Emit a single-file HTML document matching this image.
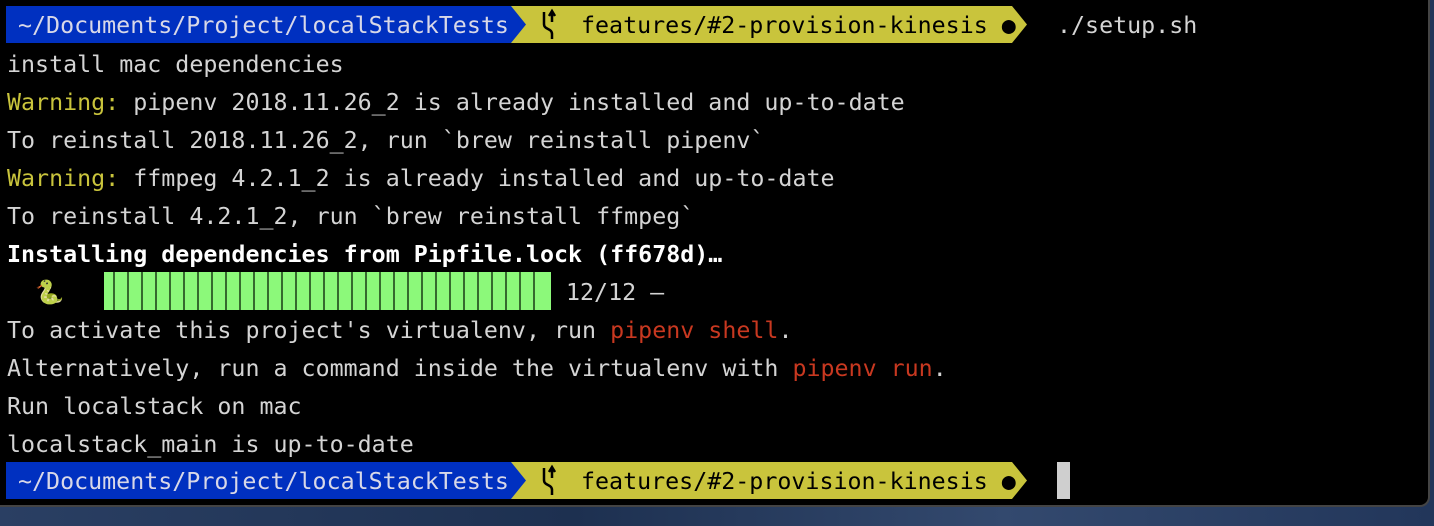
<!DOCTYPE html>
<html><head><meta charset="utf-8"><style>
html,body{margin:0;padding:0;}
body{width:1434px;height:526px;overflow:hidden;position:relative;background:linear-gradient(90deg,#2a3f63,#1d3050 40%,#33496e 70%,#22365a);font-family:"DejaVu Sans Mono","Liberation Mono",monospace;font-size:23.3px;}
.win{position:absolute;left:0;top:-20px;width:1428px;height:525px;background:#000;border-right:2px solid #444;border-bottom:2px solid #444;border-bottom-right-radius:10px;}
.l{position:absolute;left:7px;height:38px;line-height:38px;color:#d4d4d4;white-space:pre;}
.y{color:#c9c43c}.r{color:#c83820}.b{font-weight:bold;color:#fff}
.bar{position:absolute;left:6px;height:37px;width:1100px;}
.seg{position:absolute;top:1px;height:37px;line-height:37px;white-space:pre;}
</style></head><body>
<div class="win"></div>
<div class="bar" style="top:6px">
<svg width="1100" height="37" style="position:absolute;left:0;top:0">
<polygon points="0,0 1006,0 1021,18.5 1006,37 0,37" fill="#c9c43c"/>
<polygon points="0,0 505,0 520,18.5 505,37 0,37" fill="#0030c0"/>
<path d="M538 6 V18 M538 18 C538 24 546 22 546 28 V33 M546 6 V16 M543 10 L546 5 L549 10" stroke="#000" stroke-width="2.5" fill="none"/>
</svg>
<div class="seg" style="left:12px;color:#d8d8e8">~/Documents/Project/localStackTests</div>
<div class="seg" style="left:575px;color:#000">features/#2-provision-kinesis ●</div>
<div class="seg" style="left:1051px;color:#d4d4d4">./setup.sh</div>
</div>
<div class="l" style="top:46px">install mac dependencies</div>
<div class="l" style="top:84px"><span class="y">Warning:</span> pipenv 2018.11.26_2 is already installed and up-to-date</div>
<div class="l" style="top:122px">To reinstall 2018.11.26_2, run `brew reinstall pipenv`</div>
<div class="l" style="top:160px"><span class="y">Warning:</span> ffmpeg 4.2.1_2 is already installed and up-to-date</div>
<div class="l" style="top:198px">To reinstall 4.2.1_2, run `brew reinstall ffmpeg`</div>
<div class="l b" style="top:236px">Installing dependencies from Pipfile.lock (ff678d)…</div>
<div class="l" style="top:274px;left:35px;color:#b8c860">🐍</div>
<svg style="position:absolute;left:104px;top:272px" width="447" height="38">
<rect x="0" y="0" width="447" height="38" fill="#8cf97a"/>
<g stroke="#1a3a15" stroke-width="1.5">
<path d="M10 0V38M24 0V38M38 0V38M52 0V38M66 0V38M80 0V38M94 0V38M108 0V38M122 0V38M136 0V38M150 0V38M164 0V38M178 0V38M192 0V38M206 0V38M220 0V38M234 0V38M248 0V38M262 0V38M276 0V38M290 0V38M304 0V38M318 0V38M332 0V38M346 0V38M360 0V38M374 0V38M388 0V38M402 0V38M416 0V38M430 0V38"/>
</g></svg>
<div class="l" style="top:274px;left:566px">12/12 —</div>
<div class="l" style="top:312px">To activate this project's virtualenv, run <span class="r">pipenv shell</span>.</div>
<div class="l" style="top:350px">Alternatively, run a command inside the virtualenv with <span class="r">pipenv run</span>.</div>
<div class="l" style="top:388px">Run localstack on mac</div>
<div class="l" style="top:426px">localstack_main is up-to-date</div>
<div class="bar" style="top:462px">
<svg width="1100" height="37" style="position:absolute;left:0;top:0">
<polygon points="0,0 1006,0 1021,18.5 1006,37 0,37" fill="#c9c43c"/>
<polygon points="0,0 505,0 520,18.5 505,37 0,37" fill="#0030c0"/>
<path d="M538 6 V18 M538 18 C538 24 546 22 546 28 V33 M546 6 V16 M543 10 L546 5 L549 10" stroke="#000" stroke-width="2.5" fill="none"/>
<rect x="1051" y="0" width="13" height="37" fill="#cfcfcf"/>
</svg>
<div class="seg" style="left:12px;color:#d8d8e8">~/Documents/Project/localStackTests</div>
<div class="seg" style="left:575px;color:#000">features/#2-provision-kinesis ●</div>
</div>
</body></html>
